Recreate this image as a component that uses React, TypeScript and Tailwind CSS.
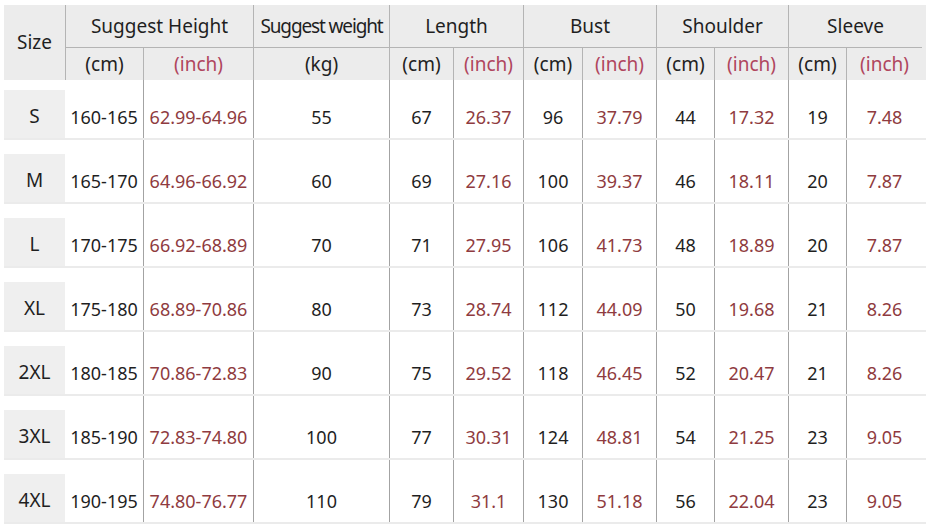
import React from 'react';

// Tabla de talles: columnas con ancho fijo para calzar con la imagen
const COLS =
  'grid grid-cols-[61px_78px_110px_136px_64px_70px_59px_74px_58px_74px_58px_76px]';

const rows = [
  ['S', '160-165', '62.99-64.96', '55', '67', '26.37', '96', '37.79', '44', '17.32', '19', '7.48'],
  ['M', '165-170', '64.96-66.92', '60', '69', '27.16', '100', '39.37', '46', '18.11', '20', '7.87'],
  ['L', '170-175', '66.92-68.89', '70', '71', '27.95', '106', '41.73', '48', '18.89', '20', '7.87'],
  ['XL', '175-180', '68.89-70.86', '80', '73', '28.74', '112', '44.09', '50', '19.68', '21', '8.26'],
  ['2XL', '180-185', '70.86-72.83', '90', '75', '29.52', '118', '46.45', '52', '20.47', '21', '8.26'],
  ['3XL', '185-190', '72.83-74.80', '100', '77', '30.31', '124', '48.81', '54', '21.25', '23', '9.05'],
  ['4XL', '190-195', '74.80-76.77', '110', '79', '31.1', '130', '51.18', '56', '22.04', '23', '9.05'],
];

// columnas con valores en pulgadas (rojo)
const inchCols = [2, 5, 7, 9, 11];

const H1 = 'flex items-center justify-center border-l border-b border-[#b4b4b4]';
const H2 = 'flex items-center justify-center border-l border-[#b4b4b4]';
const CM = 'text-[#222]';
const IN = 'text-[#b0465e]';

export default function App() {
  return (
    <div
      className="w-[926px] h-[528px] bg-white overflow-hidden pt-[5px] pl-[4px] text-[#1f1f1f]"
      style={{ fontFamily: '"Noto Sans", "Open Sans", sans-serif' }}
    >
      {/* Encabezado */}
      <div className={`${COLS} grid-rows-[43px_32px] bg-[#ececec] text-[19px] leading-none`}>
        <div className="row-span-2 flex items-center justify-center">Size</div>
        <div className={`${H1} col-span-2`}>Suggest Height</div>
        <div className={`${H1} tracking-[-0.06em]`}>Suggest weight</div>
        <div className={`${H1} col-span-2`}>Length</div>
        <div className={`${H1} col-span-2`}>Bust</div>
        <div className={`${H1} col-span-2`}>Shoulder</div>
        <div className={`${H1} col-span-2`}>Sleeve</div>

        <div className={`${H2} ${CM}`}>(cm)</div>
        <div className={`${H2} ${IN}`}>(inch)</div>
        <div className={`${H2} ${CM}`}>(kg)</div>
        <div className={`${H2} ${CM}`}>(cm)</div>
        <div className={`${H2} ${IN}`}>(inch)</div>
        <div className={`${H2} ${CM}`}>(cm)</div>
        <div className={`${H2} ${IN}`}>(inch)</div>
        <div className={`${H2} ${CM}`}>(cm)</div>
        <div className={`${H2} ${IN}`}>(inch)</div>
        <div className={`${H2} ${CM}`}>(cm)</div>
        <div className={`${H2} ${IN}`}>(inch)</div>
      </div>

      {/* Filas de datos */}
      {rows.map((r, i) => (
        <div
          key={r[0]}
          className={`${COLS} ${i === 0 ? 'h-[60px]' : 'h-[64px]'} border-b-2 border-[#ebebeb] text-[18px] leading-none`}
        >
          {r.map((v, j) => (
            <div
              key={j}
              className={`flex flex-col justify-end ${j >= 2 ? 'border-l border-[#a3a3a3]' : ''}`}
            >
              <div
                className={`h-[48px] pt-[5px] flex items-center justify-center ${
                  j === 0 ? 'bg-[#efefef] text-[19px]' : ''
                } ${inchCols.includes(j) ? 'text-[#8f3b40]' : ''}`}
              >
                {v}
              </div>
            </div>
          ))}
        </div>
      ))}
    </div>
  );
}
